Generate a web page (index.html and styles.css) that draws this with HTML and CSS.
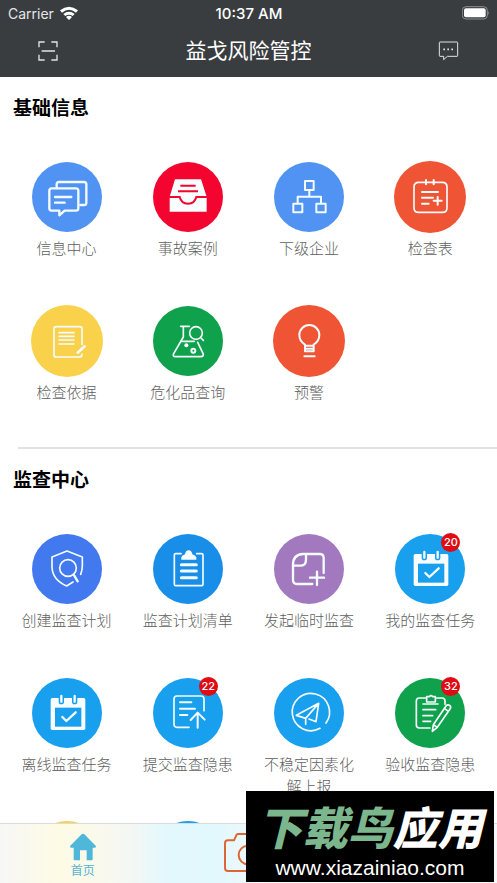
FILE: index.html
```
<!DOCTYPE html>
<html lang="zh-CN">
<head>
<meta charset="utf-8">
<meta name="viewport" content="width=device-width, initial-scale=1">
<title>益戈风险管控</title>
<link rel="stylesheet" href="styles.css">
</head>
<body>
<div class="app">
  <header class="header">
    <div class="status">
      <div class="carrier">Carrier
        <svg class="wifi" viewBox="0 0 54 42" aria-hidden="true"><path d="M0 13Q27-9 54 13L48 20Q27 2 6 20ZM10 24Q27 10 44 24L38 30Q27 22 16 30ZM18 33Q27 26 36 33L27 42Z"/></svg>
      </div>
      <div class="clock">10:37 AM</div>
      <svg class="battery" viewBox="0 0 84 42" aria-hidden="true"><rect class="battery-case" x="1" y="2" width="75" height="37" rx="11"/><rect x="6" y="7" width="65" height="27" rx="6"/><path class="battery-tip" d="M79 15q5 6 0 12z"/></svg>
    </div>
    <div class="titlebar">
      <button class="bar-button" aria-label="扫一扫"><svg viewBox="0 0 72 72"><path d="M9 25V9H26M46 9H63V25M9 47V63H26M46 63H63V47M17 36H57" stroke-width="4"/></svg></button>
      <h1>益戈风险管控</h1>
      <button class="bar-button" aria-label="消息"><svg viewBox="0 0 72 72"><path d="M9 9H60Q62 9 62 11V50Q62 52 60 52H31L20 62V52H9Q7 52 7 50V11Q7 9 9 9Z" stroke-width="3"/><path d="M19 31h5M31 31h5M43 31h5" stroke-width="5"/></svg></button>
    </div>
  </header>

  <main class="content">
    <section>
      <h2>基础信息</h2>
      <div class="grid">
        <a class="item" href="#"><svg class="icon sky" viewBox="0 0 216 216"><circle cx="108" cy="108" r="105"/><g class="w7"><path d="M77 80V70Q77 63 84 63H159Q166 63 166 70V125Q166 132 159 132H148"/><path d="M62 82H135Q142 82 142 89V142Q142 149 135 149H101L85 163V149H62Q55 149 55 142V89Q55 82 62 82ZM72 108H121M72 125H101"/></g></svg><span>信息中心</span></a>
        <a class="item" href="#"><svg class="icon red" viewBox="0 0 216 216"><circle cx="108" cy="108" r="105"/><path class="solid" d="M69 55H147L164 107V152H53V107Z"/><path class="cut" d="M50 108H83Q88 128 108 128Q128 128 133 108H167M85 74H131M78 91H138"/></svg><span>事故案例</span></a>
        <a class="item" href="#"><svg class="icon sky" viewBox="0 0 216 216"><circle cx="108" cy="108" r="105"/><path class="w6" d="M96 60H122V87H96ZM109 87V107M74 128V107H144V128M61 128H88V154H61ZM130 128H158V154H130Z"/></svg><span>下级企业</span></a>
        <a class="item" href="#"><svg class="icon orange" viewBox="0 0 216 216"><circle cx="108" cy="108" r="108"/><path class="w5" d="M74 64H145Q159 64 159 78V140Q159 154 145 154H74Q60 154 60 140V78Q60 64 74 64Z"/><path class="w6" d="M96 57V70M119 57V70M84 93H132M84 110H117M84 128H104M119 119H143M131 108V131"/></svg><span>检查表</span></a>
        <a class="item" href="#"><svg class="icon yellow" viewBox="0 0 216 216"><circle cx="108" cy="108" r="108"/><path class="w5" d="M153 118V72Q153 65 146 65H76Q69 65 69 72V149Q69 156 76 156H146Q153 156 153 148M84 83H129M84 94H129M84 105H129M84 117H129"/><path class="w8" d="M140 143L161 124"/></svg><span>检查依据</span></a>
        <a class="item" href="#"><svg class="icon green" viewBox="0 0 216 216"><circle cx="108" cy="108" r="105"/><path class="w5" d="M86 64H112M94 64V96L65 146Q61 155 70 155H146Q157 155 153 145L137 112M86 109H127M147 99L154 106"/><circle class="w5" cx="132" cy="84" r="19"/><circle class="solid" cx="103" cy="121" r="6"/><circle class="w6" cx="124" cy="137" r="6"/></svg><span>危化品查询</span></a>
        <a class="item" href="#"><svg class="icon orange" viewBox="0 0 216 216"><circle cx="108" cy="108" r="108"/><path class="w6" d="M96 139V119Q79 108 79 90A30 30 0 0 1 139 90Q139 108 122 119V139ZM96 122H122M101 131H117M94 154H125"/></svg><span>预警</span></a>
      </div>
    </section>
    <hr>
    <section>
      <h2>监查中心</h2>
      <div class="grid">
        <a class="item" href="#"><svg class="icon indigo" viewBox="0 0 216 216"><circle cx="108" cy="108" r="105"/><path class="w5" d="M149 124Q154 112 154 98V72L108 54L63 72V102Q64 140 107 159L126 147"/><circle class="w5" cx="111" cy="105" r="25"/><path class="w7" d="M128 125L140 145"/></svg><span>创建监查计划</span></a>
        <a class="item" href="#"><svg class="icon blue" viewBox="0 0 216 216"><circle cx="108" cy="108" r="105"/><path class="w5" d="M87 62H71Q67 62 67 66V154Q67 158 71 158H149Q153 158 153 154V66Q153 62 149 62H134"/><path class="solid" d="M88 80V73Q90 67 99 64Q101 52 110 52Q119 52 121 64Q131 67 133 73V80Z"/><path class="w9" d="M88 95H133M88 114H133M88 134H133"/></svg><span>监查计划清单</span></a>
        <a class="item" href="#"><svg class="icon purple" viewBox="0 0 216 216"><circle cx="108" cy="108" r="105"/><path class="w7" d="M152 120V75Q152 63 140 63H90Q60 65 60 95V141Q60 153 72 153H118M99 63V80Q99 98 81 98H60M132 116V156M111 134H153"/></svg><span>发起临时监查</span></a>
        <a class="item" href="#"><svg class="icon azure" viewBox="0 0 216 216"><circle cx="108" cy="108" r="105"/><rect class="solid" x="59" y="63" width="104" height="96" rx="5"/><path class="hole" d="M72 92H151V149H72Z"/><path class="ring" d="M91 58V74M131 58V74"/><path class="w7" d="M91 57V74M131 57V74M94 120L106 132L134 106"/></svg><b class="badge">20</b><span>我的监查任务</span></a>
        <a class="item" href="#"><svg class="icon azure" viewBox="0 0 216 216"><circle cx="108" cy="108" r="105"/><rect class="solid" x="59" y="63" width="104" height="96" rx="5"/><path class="hole" d="M72 92H151V149H72Z"/><path class="ring" d="M91 58V74M131 58V74"/><path class="w7" d="M91 57V74M131 57V74M94 120L106 132L134 106"/></svg><span>离线监查任务</span></a>
        <a class="item" href="#"><svg class="icon azure" viewBox="0 0 216 216"><circle cx="108" cy="108" r="105"/><path class="w5" d="M156 101V66Q156 57 147 57H75Q66 57 66 66V142Q66 151 75 151H111"/><path class="w6" d="M84 76H118M84 95H129M84 114H106M137 152V108M116 129L137 107L158 128"/></svg><b class="badge">22</b><span>提交监查隐患</span></a>
        <a class="item" href="#"><svg class="icon azure" viewBox="0 0 216 216"><circle cx="108" cy="108" r="105"/><path class="w5" d="M159 138A56 56 0 1 0 141 154"/><path class="w5" d="M98 142V124L137 79L70 115L98 124M137 79L129 134L108 126"/></svg><span>不稳定因素化解上报</span></a>
        <a class="item" href="#"><svg class="icon green" viewBox="0 0 216 216"><circle cx="108" cy="108" r="105"/><path class="w5" d="M98 63H76Q67 63 67 72V144Q67 153 76 153H108M124 63H144Q153 63 153 72V82M98 59H106Q111 53 116 59H124V75H98ZM87 81H132M87 98H125M87 116H116M87 133H110M115 163L118 143L156 87Q161 81 168 86Q172 90 168 96L130 151ZM118 143L130 151M151 94L163 103"/></svg><b class="badge">32</b><span>验收监查隐患</span></a>
        <a class="item" href="#" aria-label="更多功能"><svg class="icon yellow" viewBox="0 0 216 216"><circle cx="108" cy="108" r="108"/></svg></a>
        <a class="item" href="#" aria-label="更多服务"><svg class="icon azure" viewBox="0 0 216 216"><circle cx="108" cy="108" r="108"/></svg></a>
      </div>
    </section>
  </main>

  <nav class="tabs">
    <a class="tab" href="#"><svg class="home" viewBox="0 0 84 84" aria-hidden="true"><path d="M38 4Q42 0 46 4L80 38Q83 43 78 44H71V79Q71 82 68 82H53V52H33V82H17Q14 82 14 79V44H6Q1 43 4 38Z"/></svg><span>首页</span></a>
    <a class="tab" href="#" aria-label="拍照"><svg class="camera" viewBox="0 0 144 117"><path d="M12 22H30L38 5Q39 3 43 3H101Q105 3 106 5L114 22H132Q141 22 141 31V105Q141 114 132 114H12Q3 114 3 105V31Q3 22 12 22Z"/><circle cx="72" cy="66" r="28"/></svg></a>
    <a class="tab" href="#" aria-label="我的"></a>
  </nav>
  <aside class="watermark">
    <div class="brand"><span>下载鸟</span>应用</div>
    <div class="site">www.xiazainiao.com</div>
  </aside>
</div>
</body>
</html>
```
FILE: styles.css
```
* { box-sizing: border-box; }
body {
  margin: 0;
  background: #fff;
  color: #000;
  font-family: Inter, "Noto Sans CJK SC", sans-serif;
}
a { color: inherit; text-decoration: none; }
.app {
  position: relative;
  height: 100vh;
  overflow: hidden;
  display: flex;
  flex-direction: column;
}
.header { background: #393d40; color: #fff; flex: none; height: 77px; }
.status {
  display: grid;
  grid-template-columns: 1fr auto 1fr;
  align-items: center;
  height: 26px;
  padding: 0 7px 0 8px;
  font-size: 14px;
}
.carrier { display: flex; align-items: center; gap: 6px; color: #e4e6e7; }
.wifi { width: 18px; height: 14px; fill: #fff; }
.clock { font-size: 15px; font-weight: 500; }
.battery { width: 28px; height: 14px; justify-self: end; fill: #fff; }
.battery-case { fill: none; stroke: #8d9092; stroke-width: 3; }
.battery-tip { fill: #8d9092; }
.titlebar {
  display: flex;
  align-items: center;
  justify-content: space-between;
  height: 50px;
  padding: 0 36px;
}
.titlebar h1 { margin: 0; font-size: 21px; line-height: 28px; font-weight: 400; }
.bar-button { border: 0; padding: 0; background: none; width: 24px; height: 24px; }
.bar-button svg { display: block; width: 24px; height: 24px; fill: none; stroke: #e2e5e6; }
.content { flex: 1; min-height: 0; overflow: hidden; }
h2 { margin: 0; padding: 18px 13px 0; font-size: 19px; line-height: 28px; font-weight: 700; }
.grid {
  display: grid;
  grid-template-columns: repeat(4, 1fr);
  grid-auto-rows: 144px;
  padding: 38px 6px 0;
}
.item { position: relative; display: flex; flex-direction: column; align-items: center; color: #606060; }
.item span {
  width: 96px;
  margin-top: 5px;
  text-align: center;
  font-size: 15px;
  line-height: 22px;
  font-weight: 300;
}
.icon { width: 72px; height: 72px; flex: none; fill: currentColor; }
.icon [class^="w"] { fill: none; stroke: #f4fcff; stroke-linecap: round; stroke-linejoin: round; }
.icon .w5 { stroke-width: 5; }
.icon .w6 { stroke-width: 6; }
.icon .w7 { stroke-width: 7; }
.icon .w8 { stroke-width: 8; }
.icon .w9 { stroke-width: 9; }
.icon .solid { fill: #f8fdff; }
.icon .cut { fill: none; stroke: currentColor; stroke-width: 6; }
.icon .ring { fill: none; stroke: currentColor; stroke-width: 16; stroke-linecap: round; }
.sky { color: #5093f3; }
.red { color: #f3052f; }
.orange { color: #ef5535; }
.yellow { color: #fad14b; }
.green { color: #0fa14b; }
.indigo { color: #4279ee; }
.blue { color: #188ee9; }
.purple { color: #a279be; }
.azure { color: #189fee; }
.badge {
  position: absolute;
  top: 0;
  left: calc(50% + 11px);
  width: 19px;
  height: 19px;
  border-radius: 50%;
  background: #df0c14;
  color: #fff;
  font-size: 11px;
  line-height: 19px;
  font-weight: 500;
  text-align: center;
}
hr { margin: -2px 0 0 18px; border: 0; height: 2px; background: #e2e2e2; }
.tabs {
  flex: none;
  display: grid;
  grid-template-columns: repeat(3, 1fr);
  height: 60px;
  border-top: 1px solid #d8dcdc;
  background: linear-gradient(90deg, #f7f7f7 0%, #fdfbe6 11%, #fbfae9 17%, #f5f7f4 26%, #e2f8fd 34%, #e1f8fd 44%, #f3f8f9 52%, #f7f7f7 100%);
}
.tab {
  display: flex;
  flex-direction: column;
  align-items: center;
  padding-top: 9px;
  font-size: 12px;
  line-height: 20px;
  color: #55b3d2;
}
.home { width: 28px; height: 28px; fill: #4fb7da; }
.camera { width: 48px; height: 39px; fill: none; stroke: #dd6638; stroke-width: 6; }
.watermark {
  position: absolute;
  right: 3px;
  bottom: 1px;
  width: 248px;
  height: 91px;
  padding-top: 10px;
  background: #000;
  color: #fff;
  text-align: center;
}
.brand { font: italic 900 45px/50px "Noto Sans CJK SC", sans-serif; white-space: nowrap; }
.brand span { color: #7cb68d; }
.site { padding-top: 4px; font: 21px/26px "Liberation Sans", sans-serif; }
```
